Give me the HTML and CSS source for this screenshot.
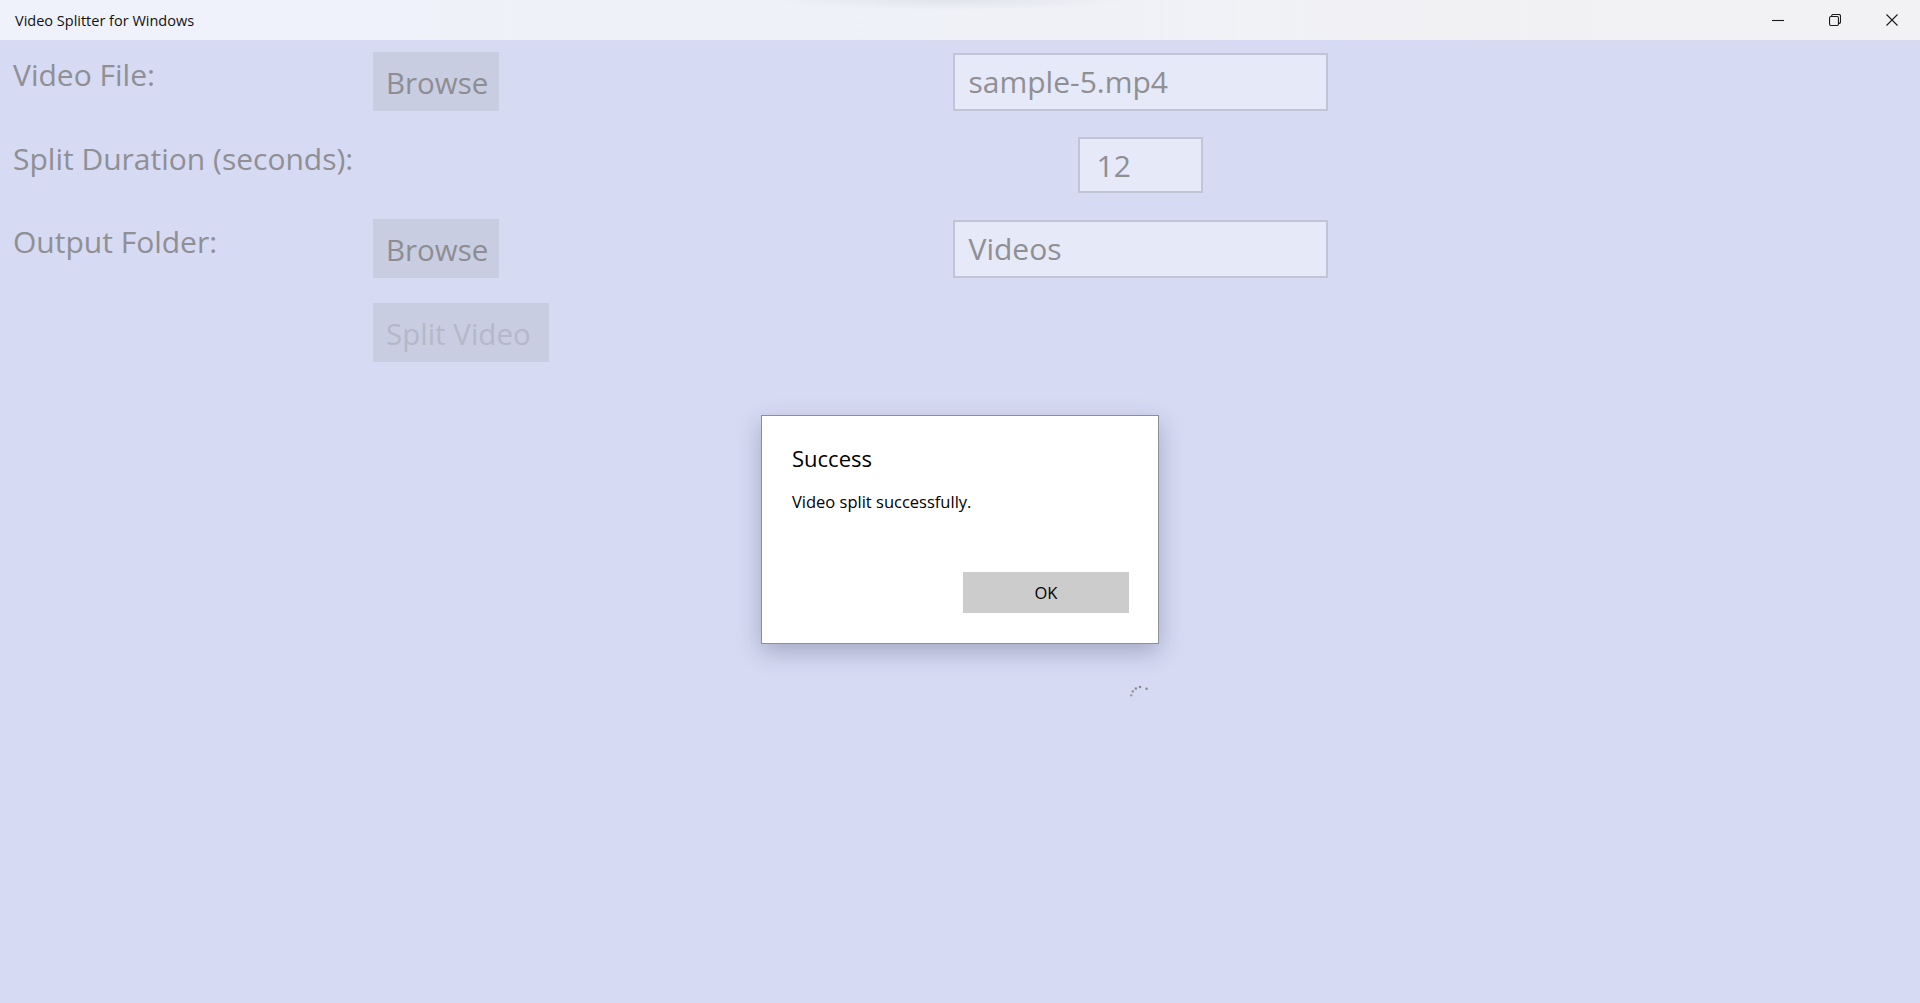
FILE: index.html
```html
<!DOCTYPE html>
<html lang="en">
<head>
<meta charset="utf-8">
<title>Video Splitter for Windows</title>
<link rel="stylesheet" href="styles.css">
</head>
<body>
<div class="window">
  <header class="titlebar">
    <span class="title">Video Splitter for Windows</span>
    <div class="controls">
      <div class="ctl"><svg width="12" height="12" viewBox="0 0 12 12"><path d="M0 6.5H12" stroke="#1a1a1a" stroke-width="1.1" fill="none"/></svg></div>
      <div class="ctl"><svg width="12" height="12" viewBox="0 0 12 12" fill="none" stroke="#1a1a1a" stroke-width="1.1"><rect x="0.55" y="2.55" width="8.9" height="8.9" rx="1.4"/><path d="M2.6 2.5V2.1a1.6 1.6 0 0 1 1.6-1.6H9.9a1.6 1.6 0 0 1 1.6 1.6V7.8a1.6 1.6 0 0 1-1.6 1.6H9.5"/></svg></div>
      <div class="ctl"><svg width="12" height="12" viewBox="0 0 12 12"><path d="M0.5 0.5L11.5 11.5M11.5 0.5L0.5 11.5" stroke="#1a1a1a" stroke-width="1.1" fill="none"/></svg></div>
    </div>
  </header>
  <main class="content">
    <div class="form">
      <div class="label">Video File:</div>
      <div class="btn">Browse</div>
      <div class="field wide">sample-5.mp4</div>

      <div class="label">Split Duration (seconds):</div>
      <div class="field narrow">12</div>

      <div class="label">Output Folder:</div>
      <div class="btn">Browse</div>
      <div class="field wide">Videos</div>

      <div class="btn split">Split Video</div>

      <div class="spinner">
        <svg width="24" height="24" viewBox="0 0 24 24">
          <circle cx="3.2" cy="13.2" r="1.3" fill="#8a8a92" opacity="0.7"/>
          <circle cx="4.8" cy="9.4" r="1.3" fill="#8a8a92" opacity="0.8"/>
          <circle cx="7.9" cy="6.6" r="1.3" fill="#8a8a92" opacity="0.9"/>
          <circle cx="12" cy="5" r="1.3" fill="#8a8a92"/>
          <circle cx="18.6" cy="6.8" r="1.3" fill="#8a8a92"/>
        </svg>
      </div>
    </div>

    <div class="dialog">
      <div class="dlg-title">Success</div>
      <div class="dlg-msg">Video split successfully.</div>
      <div class="dlg-actions">
        <div class="dlg-btn">OK</div>
      </div>
    </div>
  </main>
</div>
</body>
</html>
```
FILE: styles.css
```css
html, body {
  margin: 0;
  padding: 0;
}
body {
  width: 1920px;
  height: 1003px;
  overflow: hidden;
  background: #d6daf3;
  font-family: "Open Sans", "Noto Sans", "Liberation Sans", sans-serif;
}
.window {
  display: flex;
  flex-direction: column;
  height: 1003px;
}
.titlebar {
  height: 40px;
  flex: 0 0 40px;
  display: flex;
  align-items: center;
  justify-content: space-between;
  background:
    radial-gradient(ellipse 180px 10px at 950px 0px, rgba(200, 202, 215, 0.35), rgba(200, 202, 215, 0) 100%),
    linear-gradient(90deg, #eff2fb 0%, #eff1f9 40%, #f1f1f5 70%, #f2f2f4 100%);
}
.title {
  padding-left: 15px;
  padding-top: 1px;
  font-size: 14.5px;
  color: #111;
}
.controls {
  display: flex;
  align-self: stretch;
}
.ctl {
  width: 57px;
  display: flex;
  align-items: center;
  justify-content: center;
}
.ctl svg {
  display: block;
}
.content {
  position: relative;
  flex: 1;
}
.form {
  display: grid;
  grid-template-columns: 360px 180px 1174px;
  grid-template-rows: repeat(4, 59px) auto;
  row-gap: 24.67px;
  padding: 12px 0 0 13px;
}
.label {
  grid-column: 1;
  align-self: start;
  font-size: 30px;
  line-height: 36px;
  padding-top: 5px;
  color: #8f8f94;
  white-space: nowrap;
}
.btn {
  grid-column: 2;
  box-sizing: border-box;
  width: 126px;
  height: 59px;
  padding: 2px 0 0 13px;
  display: flex;
  align-items: center;
  background: #c9cde2;
  color: #8d8d92;
  font-size: 29.5px;
  white-space: nowrap;
}
.btn.split {
  grid-row: 4;
  width: 176px;
  color: #b5b8ca;
}
.field {
  grid-column: 3;
  justify-self: center;
  align-self: center;
  box-sizing: border-box;
  border: 2px solid #c1c4d6;
  background: #e6e9f7;
  display: flex;
  align-items: center;
  font-size: 30px;
  color: #8f8f94;
  white-space: nowrap;
}
.field.wide {
  width: 375px;
  height: 58px;
  padding-left: 14px;
}
.field.narrow {
  width: 125px;
  height: 56px;
  padding-left: 17px;
}
.spinner {
  grid-column: 3;
  grid-row: 5;
  justify-self: center;
  margin-top: 295px;
}
.spinner svg {
  display: block;
}
.dialog {
  position: absolute;
  left: 761px;
  top: 375px;
  width: 398px;
  height: 229px;
  box-sizing: border-box;
  border: 1px solid #8c8e9c;
  background: #ffffff;
  box-shadow: 0 8px 22px rgba(40, 44, 80, 0.28);
  padding: 28px 29px 30px 30px;
  display: flex;
  flex-direction: column;
}
.dlg-title {
  font-size: 22px;
  line-height: 28px;
  color: #000;
}
.dlg-msg {
  margin-top: 19px;
  font-size: 16.5px;
  line-height: 22px;
  color: #000;
}
.dlg-actions {
  margin-top: auto;
  display: flex;
  justify-content: flex-end;
}
.dlg-btn {
  width: 166px;
  height: 41px;
  background: #cccccc;
  display: flex;
  align-items: center;
  justify-content: center;
  font-size: 16.5px;
  color: #000;
}
```
